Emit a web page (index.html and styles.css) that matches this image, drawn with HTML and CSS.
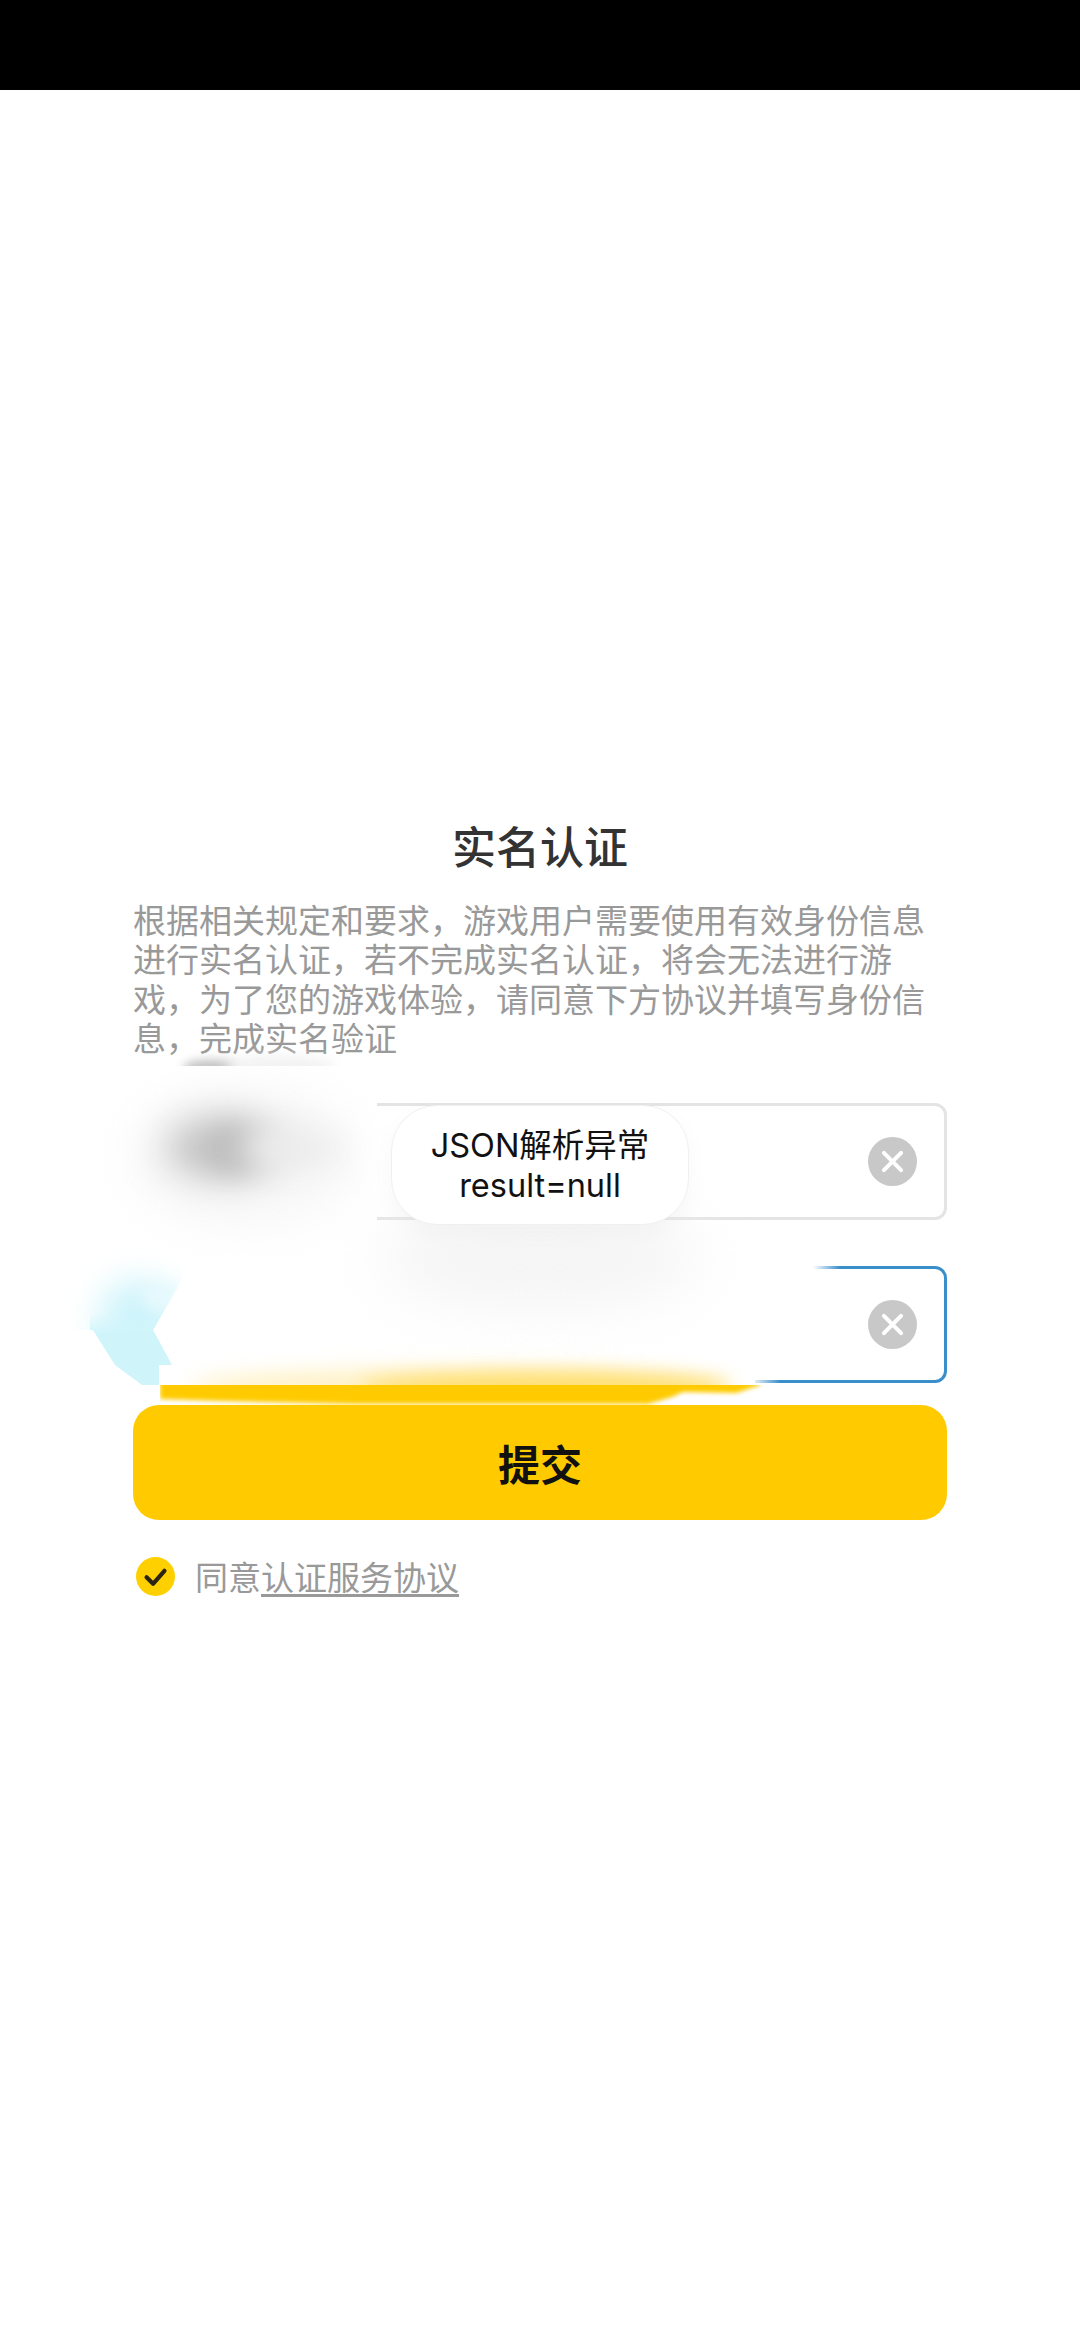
FILE: index.html
```html
<!DOCTYPE html>
<html lang="zh-CN">
<head>
<meta charset="utf-8">
<title>实名认证</title>
<link rel="stylesheet" href="styles.css">
</head>
<body>
<div class="status-bar"></div>
<main class="form">
  <h1 class="title">实名认证</h1>
  <p class="desc">根据相关规定和要求，游戏用户需要使用有效身份信息进行实名认证，若不完成实名认证，将会无法进行游戏，为了您的游戏体验，请同意下方协议并填写身份信息，完成实名验证</p>
  <div class="field">
    <span class="clear"><svg viewBox="0 0 24 24"><path d="M7.8 7.8 16.2 16.2M16.2 7.8 7.8 16.2"/></svg></span>
  </div>
  <div class="field field-active">
    <span class="clear"><svg viewBox="0 0 24 24"><path d="M7.8 7.8 16.2 16.2M16.2 7.8 7.8 16.2"/></svg></span>
  </div>
  <button class="submit">提交</button>
  <div class="agree">
    <span class="check"><svg viewBox="0 0 24 24"><path d="M6.5 12.5 10.5 16.5 17.5 8.5"/></svg></span>
    <span class="agree-text">同意<u>认证服务协议</u></span>
  </div>
</main>

<div class="smear smear-top"></div>
<div class="smear smear-top-tail"></div>
<div class="smear smear-mask-one"></div>
<div class="smear smear-halo"></div>
<div class="smear smear-blob"></div>
<div class="smear smear-blob-core"></div>
<div class="smear smear-blob-tail"></div>
<div class="smear smear-mask-left"></div>
<div class="smear smear-cyan-clip">
  <div class="smear-cyan-glow"></div>
  <div class="smear-cyan-right"></div>
  <div class="smear-cyan-body"></div>
</div>
<div class="smear smear-mask-two"></div>
<div class="smear smear-strip"></div>
<div class="smear smear-strip-low"></div>
<div class="smear smear-shade"></div>
<div class="smear smear-glow-clip"><div class="smear-glow"></div><div class="smear-glow-core"></div></div>
<div class="smear smear-band"><div class="smear-band-fill"></div></div>
<div class="toast">JSON解析异常<br>result=null</div>
</body>
</html>
```
FILE: styles.css
```css
* { box-sizing: border-box; }
html, body { margin: 0; padding: 0; background: #fff; }
body {
  position: relative;
  width: 1080px;
  height: 2340px;
  overflow: hidden;
  font-family: "Noto Sans CJK SC", "Noto Sans", sans-serif;
}
.status-bar { height: 90px; background: #000; }
.form { display: flex; flex-direction: column; padding: 725px 133px 0; }
.title {
  margin: 0;
  font-size: 44px;
  line-height: 60px;
  font-weight: 500;
  color: #333;
  text-align: center;
}
.desc {
  margin: 25px 0 46px;
  font-size: 33px;
  line-height: 39.3px;
  color: #999;
}
.field {
  display: flex;
  align-items: center;
  justify-content: flex-end;
  height: 117px;
  margin-bottom: 46px;
  padding-right: 27px;
  border: 3px solid #e4e4e4;
  border-radius: 12px;
}
.field-active { margin-bottom: 22px; border-color: #3a8fcb; }
.clear {
  display: flex;
  width: 49px;
  height: 49px;
  border-radius: 50%;
  background: #c8c8c8;
}
.clear svg { width: 100%; height: 100%; fill: none; stroke: #fff; stroke-width: 2; stroke-linecap: round; }
.submit {
  height: 115px;
  border: 0;
  border-radius: 26px;
  background: #ffcb00;
  color: #111;
  font-family: inherit;
  font-size: 42px;
  font-weight: 700;
  padding: 0;
}
.agree { display: flex; align-items: center; gap: 20px; margin-top: 36px; padding-left: 3px; height: 40px; }
.check { display: flex; width: 39px; height: 39px; border-radius: 50%; background: #ffd000; }
.check svg { width: 100%; height: 100%; fill: none; stroke: #2a2410; stroke-width: 2.6; stroke-linecap: round; stroke-linejoin: round; }
.agree-text { font-size: 33px; line-height: 40px; color: #999; }
.agree-text u { text-underline-offset: 4px; }

.smear { position: absolute; }
.smear-top { left: 183px; top: 1060px; width: 56px; height: 16px; background: #bcbcbc; border-radius: 50%; filter: blur(5px); }
.smear-top-tail { left: 225px; top: 1056px; width: 110px; height: 20px; background: #f2f2f2; border-radius: 50%; filter: blur(6px); }
.smear-mask-one { left: 90px; top: 1066px; width: 287px; height: 190px; background: #fff; }
.smear-halo { left: 130px; top: 1085px; width: 230px; height: 145px; background: #f8f8f8; border-radius: 50%; filter: blur(20px); }
.smear-blob { left: 165px; top: 1117px; width: 116px; height: 62px; background: #c4c4c4; border-radius: 50%; filter: blur(18px); }
.smear-blob-core { left: 208px; top: 1128px; width: 50px; height: 42px; background: #bcbcbc; border-radius: 50%; filter: blur(14px); }
.smear-blob-tail { left: 240px; top: 1126px; width: 100px; height: 44px; background: #ececec; border-radius: 50%; filter: blur(15px); }
.smear-mask-left { left: 125px; top: 1255px; width: 65px; height: 130px; background: #fff; }
.smear-cyan-clip {
  left: 50px;
  top: 1240px;
  width: 140px;
  height: 145px;
  overflow: hidden;
  clip-path: polygon(0 0, 133px 0, 133px 38px, 103px 90px, 122px 125px, 109px 125px, 109px 145px, 92px 145px, 65px 125px, 43px 90px, 0 90px);
}
.smear-cyan-glow { position: absolute; left: 48px; top: 40px; width: 82px; height: 74px; background: #cef4fb; border-radius: 50%; filter: blur(16px); }
.smear-cyan-right { position: absolute; left: 92px; top: 44px; width: 40px; height: 26px; background: #e6f9fd; border-radius: 50%; filter: blur(7px); }
.smear-cyan-body { position: absolute; left: 40px; top: 72px; width: 85px; height: 73px; background: linear-gradient(to bottom, rgba(207, 245, 251, 0), #cff5fb 30%); }
.smear-mask-two { left: 185px; top: 1262px; width: 570px; height: 123px; background: #fff; }
.smear-strip { left: 750px; top: 1262px; width: 90px; height: 12px; background: linear-gradient(to right, #fff 70%, rgba(255, 255, 255, 0)); }
.smear-strip-low { left: 750px; top: 1375px; width: 30px; height: 10px; background: linear-gradient(to right, #fff, rgba(255, 255, 255, 0)); }
.smear-shade { left: 380px; top: 1205px; width: 320px; height: 105px; background: #f5f5f5; border-radius: 50%; filter: blur(28px); }
.smear-glow-clip { left: 140px; top: 1330px; width: 660px; height: 55px; overflow: hidden; }
.smear-glow { position: absolute; left: 50px; top: 38px; width: 540px; height: 36px; background: #fff2c8; border-radius: 50%; filter: blur(10px); }
.smear-glow-core { position: absolute; left: 220px; top: 42px; width: 370px; height: 30px; background: #ffdf70; border-radius: 50%; filter: blur(9px); }
.smear-band { left: 160px; top: 1385px; width: 620px; height: 20px; overflow: hidden; }
.smear-band-fill { position: relative; top: -8px; height: 40px; filter: blur(2px); }
.smear-band-fill::before {
  content: "";
  display: block;
  height: 100%;
  background: #ffcb00;
  clip-path: polygon(-30px 0, 600px 0, 600px 8px, 576px 16px, 523px 15px, 512px 20px, 488px 27px, 194px 27px, 60px 24px, 0 22px, -30px 21px);
}
.toast {
  position: absolute;
  left: 391px;
  top: 1105px;
  width: 298px;
  height: 120px;
  padding-top: 2px;
  display: flex;
  align-items: center;
  justify-content: center;
  text-align: center;
  background: #fff;
  border: 1px solid #f0f0f0;
  border-radius: 46px;
  box-shadow: 0 8px 24px rgba(0, 0, 0, 0.03);
  color: #111;
  font-family: "Inter", "Noto Sans CJK SC", sans-serif;
  font-size: 32.5px;
  line-height: 40px;
}
```
